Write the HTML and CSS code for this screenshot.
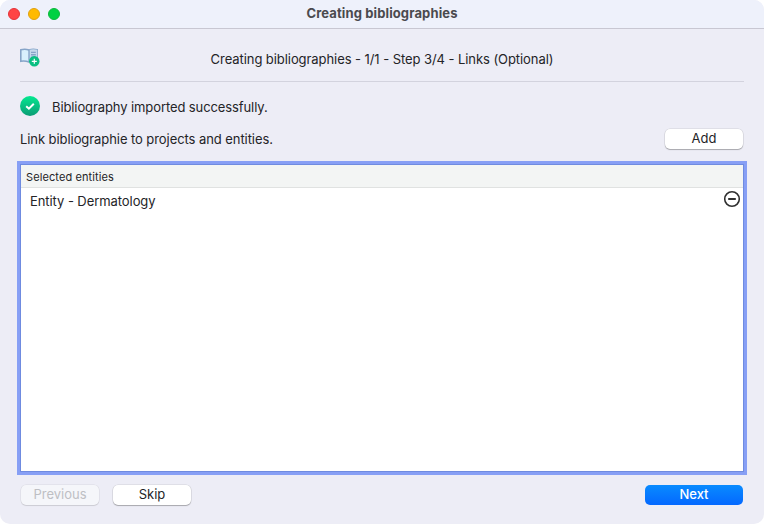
FILE: index.html
```html
<!DOCTYPE html>
<html lang="en">
<head>
    <meta charset="UTF-8">
    <meta name="viewport" content="width=device-width, initial-scale=1.0">
    <title>Creating bibliographies</title>
    <link rel="stylesheet" href="styles.css">
</head>
<body>
    <div class="window">
        <div class="titlebar">
            <div class="controls">
                <span class="dot close"></span>
                <span class="dot minimize"></span>
                <span class="dot maximize"></span>
            </div>
            <h1 class="title">Creating bibliographies</h1>
        </div>

        <div class="content">
            <div class="header">
                <svg class="book-icon" width="20" height="20" viewBox="0 0 20 20">
                    <path d="M.8 1.8Q5 .6 9 2Q13 .6 17.2 1.8V13.2Q13 12.4 9 14Q5 12.4.8 13.2Z" fill="#d9f0fd" stroke="#86a4c8" stroke-width="1.6"/>
                    <path d="M9 2Q13 .6 17.2 1.8V13.2Q13 12.4 9 14Z" fill="#c5d9ec"/>
                    <path d="M9 2V14M11 4.4H15.8M11 6.8H15.8M11 9.2H15.8" fill="none" stroke="#86a4c8" stroke-width="1.4"/>
                    <circle cx="14.3" cy="13.3" r="5.2" fill="#09bf82"/>
                    <path d="M14.3 10.8V15.8M11.8 13.3H16.8" stroke="#fff" stroke-width="1.2"/>
                </svg>
                <p class="step">Creating bibliographies - 1/1 - Step 3/4 - Links (Optional)</p>
            </div>

            <div class="status">
                <svg width="20" height="20" viewBox="0 0 20 20">
                    <defs>
                        <linearGradient id="green" x1="0" y1="0" x2="0" y2="1">
                            <stop offset="0" stop-color="#05e890"/>
                            <stop offset="1" stop-color="#0b9c75"/>
                        </linearGradient>
                    </defs>
                    <circle cx="10" cy="10" r="10" fill="url(#green)"/>
                    <path d="M6.2 10.3L8.9 12.7L13.8 7.8" fill="none" stroke="#fff" stroke-width="2"/>
                </svg>
                <p class="status-text">Bibliography imported successfully.</p>
            </div>

            <div class="link-row">
                <p class="link-text">Link bibliographie to projects and entities.</p>
                <button class="add">Add</button>
            </div>

            <div class="list">
                <div class="list-header">Selected entities</div>
                <div class="list-item">
                    <span class="entity">Entity - Dermatology</span>
                    <svg width="18" height="18" viewBox="0 0 18 18">
                        <circle cx="9" cy="9" r="7.3" fill="none" stroke="#303030" stroke-width="1.6"/>
                        <path d="M5.2 9H12.8" stroke="#303030" stroke-width="1.8"/>
                    </svg>
                </div>
            </div>

            <div class="footer">
                <button class="previous" disabled>Previous</button>
                <button class="skip">Skip</button>
                <button class="next">Next</button>
            </div>
        </div>
    </div>
</body>
</html>
```
FILE: styles.css
```css
body {
    margin: 0;
    background-color: #fff;
    font-family: Inter, "Liberation Sans", sans-serif;
    font-size: 13px;
    line-height: 16px;
    letter-spacing: -0.07px;
    color: #242427;
    overflow: hidden;
}

.window {
    display: flex;
    flex-direction: column;
    height: 524px;
    background-color: #ededf6;
    border-radius: 10px;
    overflow: hidden;
}

.titlebar {
    display: grid;
    grid-template-columns: 100px 1fr 100px;
    align-items: center;
    box-sizing: border-box;
    height: 29px;
    padding-bottom: 1px;
    background-color: #eef1fb;
    border-bottom: 1px solid #c8c7d2;
}

.controls {
    display: flex;
    gap: 8px;
    padding-left: 8px;
}

.dot {
    box-sizing: border-box;
    width: 12px;
    height: 12px;
    border-radius: 50%;
}

.close {
    background-color: #ff4444;
    border: 1px solid #e4333a;
}

.minimize {
    background-color: #ffba00;
    border: 1px solid #e0a110;
}

.maximize {
    background-color: #00d142;
    border: 1px solid #0db83c;
}

.title {
    margin: 0;
    padding-bottom: 1px;
    font-size: 13px;
    font-weight: 700;
    letter-spacing: 0.12px;
    text-align: center;
    color: #4a4a4e;
}

.content {
    display: flex;
    flex-direction: column;
    flex: 1;
    padding: 0 20px;
}

p {
    margin: 0;
}

.header {
    display: grid;
    grid-template-columns: 20px 1fr 20px;
    box-sizing: border-box;
    height: 53px;
    padding-top: 19px;
    border-bottom: 1px solid #d3d3de;
}

.step {
    padding-top: 3px;
    text-align: center;
}

.status {
    display: flex;
    gap: 12px;
    padding-top: 14px;
}

.status-text {
    padding-top: 3px;
    letter-spacing: -0.1px;
}

.link-row {
    display: flex;
    justify-content: space-between;
    align-items: center;
    height: 20px;
    margin-top: 13px;
}

.link-text {
    padding-bottom: 1px;
}

button {
    width: 78px;
    height: 20px;
    padding: 0 0 2px;
    border: none;
    border-radius: 5px;
    background-color: #fff;
    box-shadow: 0 0 0 0.5px rgba(0,0,0,0.12), 0 1px 1px rgba(0,0,0,0.25);
    font-family: inherit;
    font-size: 13px;
    color: #242427;
}

.add {
    margin-right: 1px;
}

.list {
    box-sizing: border-box;
    height: 308px;
    margin-top: 15px;
    border: 1px solid #6f8be0;
    background-color: #fff;
    box-shadow: 0 0 0 3px #879ff5;
}

.list-header {
    box-sizing: border-box;
    height: 23px;
    padding: 4px 5px;
    background-color: #f3f5f4;
    border-bottom: 1px solid #e0e2e1;
    font-size: 11px;
    line-height: 16px;
    letter-spacing: 0.1px;
}

.list-item {
    display: flex;
    justify-content: space-between;
    padding: 2px 2px 0 9px;
}

.entity {
    padding-top: 3px;
}

.footer {
    display: flex;
    gap: 14px;
    padding: 13px 1px 0;
}

.previous {
    background-color: #f5f6fa;
    box-shadow: 0 0 0 0.5px rgba(0,0,0,0.08), 0 1px 1px rgba(0,0,0,0.1);
    color: #bebfc4;
}

.next {
    width: 98px;
    margin-left: auto;
    background: linear-gradient(#098bff, #0468ff);
    box-shadow: none;
    color: #fff;
    font-weight: 500;
}
```
